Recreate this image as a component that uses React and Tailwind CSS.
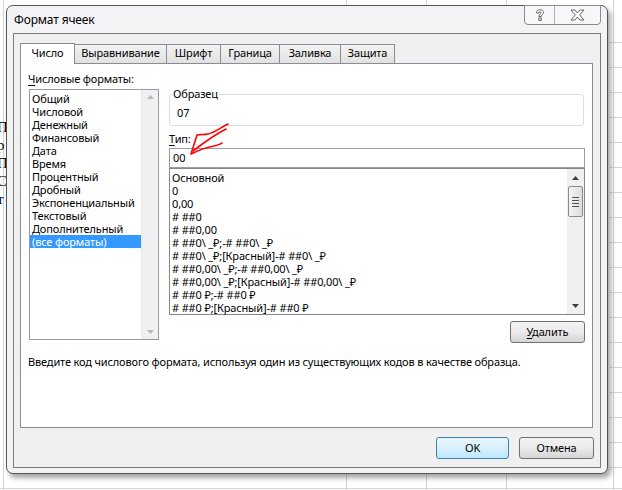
import React from "react";

const formats = [
  "Общий",
  "Числовой",
  "Денежный",
  "Финансовый",
  "Дата",
  "Время",
  "Процентный",
  "Дробный",
  "Экспоненциальный",
  "Текстовый",
  "Дополнительный",
  "(все форматы)",
];

const codes = [
  "Основной",
  "0",
  "0,00",
  "# ##0",
  "# ##0,00",
  "# ##0\\ _₽;-# ##0\\ _₽",
  "# ##0\\ _₽;[Красный]-# ##0\\ _₽",
  "# ##0,00\\ _₽;-# ##0,00\\ _₽",
  "# ##0,00\\ _₽;[Красный]-# ##0,00\\ _₽",
  "# ##0 ₽;-# ##0 ₽",
  "# ##0 ₽;[Красный]-# ##0 ₽",
];

const tabs = [
  { label: "Выравнивание", w: "w-[93px]" },
  { label: "Шрифт", w: "w-[55px]" },
  { label: "Граница", w: "w-[60px]" },
  { label: "Заливка", w: "w-[62px]" },
  { label: "Защита", w: "w-[55px]" },
];

const Arrow = ({ up, disabled }) => (
  <svg width="7" height="4" viewBox="0 0 7 4">
    <path
      d={up ? "M0 4 L3.5 0 L7 4 Z" : "M0 0 L3.5 4 L7 0 Z"}
      fill={disabled ? "#b8b8b8" : "#404040"}
    />
  </svg>
);

const Btn = ({ children, focused, className = "" }) => (
  <div
    className={`h-[22px] rounded-[3px] border flex items-center justify-center ${
      focused
        ? "border-[#3c7fb1] bg-linear-to-b from-[#eaf6fd] via-[#d9f0fc] to-[#bee6fd]"
        : "border-[#707070] bg-linear-to-b from-[#f2f2f2] via-[#ebebeb] to-[#d5d5d5]"
    } ${className}`}
  >
    {children}
  </div>
);

export default function App() {
  return (
    <div
      className="relative w-[622px] h-[490px] overflow-hidden bg-white text-[11px] tracking-[-0.15px] text-black"
      style={{ fontFamily: '"Noto Sans", "Open Sans", sans-serif' }}
    >
      {/* spreadsheet behind */}
      <div className="absolute left-[3px] top-0 w-px h-[490px] bg-[#d4d4d4]" />
      <div className="absolute left-[346px] top-0 w-px h-[490px] bg-[#d4d4d4]" />
      <div className="absolute left-[426px] top-0 w-px h-[490px] bg-[#d4d4d4]" />
      <div className="absolute left-[506px] top-0 w-px h-[490px] bg-[#d4d4d4]" />
      <div className="absolute left-[613px] top-0 w-px h-[490px] bg-[#d4d4d4]" />
      <div className="absolute left-0 top-[488px] w-[622px] h-px bg-[#d4d4d4]" />
      <div className="absolute right-0 top-[42px] w-[12px] flex flex-col">
        {Array.from({ length: 18 }).map((_, i) => (
          <div key={i} className="h-[25px] border-t border-[#d4d4d4]" />
        ))}
      </div>
      <div
        className="absolute left-[-3px] top-[118px] flex flex-col leading-[18px] text-[15px] tracking-normal"
        style={{ fontFamily: '"Liberation Serif", serif' }}
      >
        <span>П</span>
        <span>р</span>
        <span>П</span>
        <span>С</span>
        <span>т</span>
      </div>

      {/* dialog window */}
      <div className="absolute left-[6px] top-[5px] w-[602px] h-[469px] rounded-[7px] border border-[#555] bg-[#f3f3f6] shadow-[3px_4px_5px_rgba(0,0,0,0.35)] flex flex-col px-[6px] pb-[5px]">
        <div className="h-[27px] flex items-center pl-[1px] text-[12px]">Формат ячеек</div>

        <div className="absolute top-[-1px] right-[6px] flex h-[20px] border border-[#8c8c8c] rounded-b-[4px] bg-[#f7f7f9] overflow-hidden">
          <div className="w-[30px] flex items-center justify-center border-r border-[#b0b0b0]">
            <svg width="10" height="13" viewBox="0 0 10 13">
              <path
                d="M1.5 4 C1.5 1.5 3 0.8 5 0.8 C7.2 0.8 8.5 2 8.5 3.6 C8.5 5.3 6.3 5.8 6.3 7.6 L3.8 7.6 C3.8 5.4 6 5 6 3.8 C6 3.2 5.6 2.8 5 2.8 C4.3 2.8 4 3.3 4 4 Z M3.8 9 L6.3 9 L6.3 11.5 L3.8 11.5 Z"
                fill="#fff"
                stroke="#555"
                strokeWidth="0.9"
              />
            </svg>
          </div>
          <div className="w-[45px] flex items-center justify-center">
            <svg width="15" height="12" viewBox="0 0 15 12">
              <path
                d="M1 1 L5 1 L7.5 4 L10 1 L14 1 L9.7 6 L14 11 L10 11 L7.5 8 L5 11 L1 11 L5.3 6 Z"
                fill="#fff"
                stroke="#555"
                strokeWidth="0.9"
                strokeLinejoin="round"
              />
            </svg>
          </div>
        </div>

        {/* client area */}
        <div className="flex-1 border border-[#7a7a7a] bg-[#f0f0f0] flex flex-col pt-[8px] pl-[6px] pr-[7px]">
          {/* tabs */}
          <div className="flex h-[21px] items-end">
            <div className="w-[55px] h-[21px] -mb-px relative z-10 bg-white border border-b-0 border-[#898c95] flex items-center justify-center pb-[2px]">
              Число
            </div>
            {tabs.map((t) => (
              <div
                key={t.label}
                className={`${t.w} h-[19px] -ml-px border border-b-0 border-[#898c95] bg-linear-to-b from-[#f3f3f3] to-[#e1e1e1] flex items-center justify-center pb-[1px]`}
              >
                {t.label}
              </div>
            ))}
          </div>

          {/* panel */}
          <div className="h-[365px] border border-[#898c95] bg-white flex flex-col">
            <div className="flex">
              {/* left column */}
              <div className="flex flex-col pl-[7px] pt-[8px]">
                <div className="h-[14px] leading-[14px]">
                  <span className="underline underline-offset-2">Ч</span>исловые форматы:
                </div>
                <div className="ml-[1px] mt-[3px] w-[130px] h-[251px] border border-[#9a9a9a] flex">
                  <div className="flex-1 flex flex-col pt-[2px] leading-[13px]">
                    {formats.map((f, i) => (
                      <div
                        key={f}
                        className={`h-[13px] pl-[2px] whitespace-nowrap ${
                          i === formats.length - 1 ? "bg-[#3399ff] text-white" : ""
                        }`}
                      >
                        {f}
                      </div>
                    ))}
                  </div>
                  <div className="w-[17px] bg-[#f0f0f2] flex flex-col justify-between items-center py-[5px] border-l border-[#e8e8e8]">
                    <Arrow up disabled />
                    <Arrow disabled />
                  </div>
                </div>
              </div>

              {/* right column */}
              <div className="ml-[10px] w-[416px] flex flex-col pt-[30px]">
                <div className="relative w-[415px] h-[32px] border border-[#d5dfe5] rounded-[3px] flex items-center pl-[7px] pt-[6px]">
                  <span className="absolute left-[2px] top-[-8px] bg-white px-[1px] leading-[14px]">
                    Образец
                  </span>
                  07
                </div>
                <div className="mt-[6px] h-[14px] leading-[14px]">
                  <span className="underline underline-offset-2">Т</span>ип:
                </div>
                <div className="mt-[2px] h-[20px] border border-[#9a9da3] flex items-center pl-[3px]">
                  00
                </div>
                <div className="h-[147px] border border-[#828790] flex">
                  <div className="flex-1 flex flex-col pt-[2px] pl-[2px] leading-[13px]">
                    {codes.map((c) => (
                      <div key={c} className="h-[13px] whitespace-nowrap">
                        {c}
                      </div>
                    ))}
                  </div>
                  <div className="w-[17px] bg-[#f0f0f2] flex flex-col items-center">
                    <div className="h-[17px] flex items-center justify-center">
                      <Arrow up />
                    </div>
                    <div className="w-[15px] h-[31px] rounded-[2px] border border-[#8a8a8a] bg-linear-to-r from-[#f4f4f4] to-[#dcdcdc] flex flex-col items-center justify-center gap-[2px]">
                      <div className="w-[7px] h-px bg-[#555]" />
                      <div className="w-[7px] h-px bg-[#555]" />
                      <div className="w-[7px] h-px bg-[#555]" />
                      <div className="w-[7px] h-px bg-[#555]" />
                    </div>
                    <div className="flex-1" />
                    <div className="h-[17px] flex items-center justify-center">
                      <Arrow />
                    </div>
                  </div>
                </div>
                <div className="flex justify-end mt-[6px]">
                  <Btn className="w-[75px]">
                    <span>
                      <span className="underline underline-offset-2">У</span>далить
                    </span>
                  </Btn>
                </div>
              </div>
            </div>
            <div className="pl-[7px] mt-[12px] leading-[14px]">
              Введите код числового формата, используя один из существующих кодов в качестве образца.
            </div>
          </div>

          {/* bottom buttons */}
          <div className="flex justify-end gap-[10px] mt-[9px] -mr-[1px]">
            <Btn focused className="w-[73px]">
              OK
            </Btn>
            <Btn className="w-[75px]">Отмена</Btn>
          </div>
        </div>
      </div>

      {/* red hand-drawn arrow */}
      <svg className="absolute left-0 top-0 pointer-events-none" width="622" height="490" viewBox="0 0 622 490">
        <g fill="none" stroke="#ff0000" strokeWidth="1.6" strokeLinecap="round" strokeLinejoin="round">
          <path d="M228 124 C220 128 214 133 208 134 C204 135 200 134 197 135 L191 154 C199 150 208 147 214 146 C218 145 221 144 222 143" />
          <path d="M226 129 C216 134 206 141 193 151" />
        </g>
      </svg>
    </div>
  );
}
